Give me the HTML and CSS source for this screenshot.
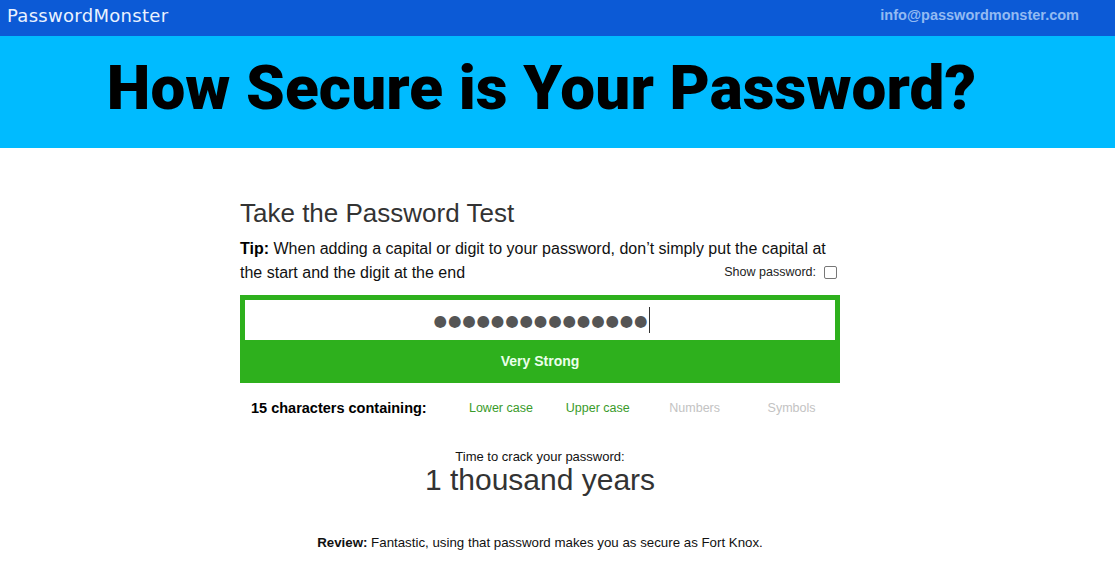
FILE: index.html
```html
<!DOCTYPE html>
<html>
<head>
<meta charset="utf-8">
<link rel="stylesheet" href="styles.css">
</head>
<body>
<header class="topbar">
  <div class="brand">PasswordMonster</div>
  <div class="email">info@passwordmonster.com</div>
</header>
<section class="hero">
  <h1 class="hero-title">How Secure is Your Password?</h1>
</section>
<main class="content">
  <h2 class="test-title">Take the Password Test</h2>
  <p class="tip"><b>Tip:</b> When adding a capital or digit to your password, don’t simply put the capital at the start and the digit at the end<label class="show"><span>Show password:</span><span class="checkbox"></span></label></p>
  <div class="meter">
    <div class="field"><span class="dots">●●●●●●●●●●●●●●●</span><span class="caret"></span></div>
    <div class="strength">Very Strong</div>
  </div>
  <div class="chars">
    <div class="chars-label">15 characters containing:</div>
    <div class="chk on">Lower case</div>
    <div class="chk on">Upper case</div>
    <div class="chk">Numbers</div>
    <div class="chk">Symbols</div>
  </div>
  <div class="crack">
    <div class="crack-label">Time to crack your password:</div>
    <div class="crack-value">1 thousand years</div>
  </div>
  <p class="review"><b>Review:</b> Fantastic, using that password makes you as secure as Fort Knox.</p>
</main>
</body>
</html>
```
FILE: styles.css
```css
* { box-sizing: border-box; }
body {
  margin: 0;
  font-family: "Liberation Sans", Arial, sans-serif;
  background: #fff;
  color: #000;
}
.topbar {
  height: 36px;
  background: #0c5ad6;
  display: flex;
  align-items: center;
  justify-content: space-between;
  padding: 0 36px 6px 7px;
}
.brand {
  font-family: "DejaVu Sans", sans-serif;
  font-size: 18px;
  color: #eaf2ff;
  letter-spacing: 0.3px;
}
.email {
  font-size: 14.5px;
  font-weight: bold;
  color: #93baf2;
}
.hero {
  height: 112px;
  background: #00bbff;
  display: flex;
  justify-content: center;
  padding: 12px 32px 0 0;
}
.hero-title {
  margin: 0;
  font-family: "Roboto", sans-serif;
  font-weight: 900;
  font-size: 62px;
  line-height: 80px;
  letter-spacing: 0.1px;
  color: #000;
}
.content {
  width: 600px;
  margin-left: 240px;
  padding-top: 50px;
}
.test-title {
  margin: 0;
  font-weight: normal;
  font-size: 26px;
  line-height: 30px;
  color: #333;
}
.tip {
  margin: 9px 0 0;
  font-size: 16px;
  line-height: 24px;
  color: #111;
}
.tip b { color: #000; }
.show {
  float: right;
  display: flex;
  align-items: center;
  gap: 8px;
  margin: 3px 3px 0 0;
  font-size: 12.5px;
  line-height: 16px;
  color: #222;
}
.checkbox {
  width: 13px;
  height: 13px;
  border: 1px solid #777;
  border-radius: 2px;
  background: #fff;
}
.meter {
  margin-top: 10px;
  background: #2eb01d;
  padding: 5px 5px 0 5px;
}
.field {
  height: 40px;
  background: #fff;
  display: flex;
  align-items: center;
  justify-content: center;
  padding-top: 2px;
}
.dots {
  font-family: "DejaVu Sans", sans-serif;
  font-size: 15.5px;
  color: #555;
  letter-spacing: 0.8px;
  margin-left: 4px;
}
.caret {
  width: 1px;
  height: 26px;
  background: #333;
  margin-left: 1px;
  margin-top: -2px;
}
.strength {
  height: 43px;
  display: flex;
  align-items: center;
  justify-content: center;
  color: #eaffea;
  font-weight: bold;
  font-size: 14px;
  padding-bottom: 1px;
}
.chars {
  display: flex;
  align-items: center;
  height: 50px;
  padding-left: 11px;
}
.chars-label {
  width: 208px;
  font-weight: bold;
  font-size: 14.5px;
}
.chk {
  width: 100px;
  text-align: center;
  font-size: 12.5px;
  color: #c3c3c3;
}
.chk.on { color: #3a9b2a; }
.crack {
  margin-top: 16px;
  text-align: center;
  color: #111;
}
.crack-label {
  font-size: 13px;
  line-height: 15px;
}
.crack-value {
  font-size: 30px;
  line-height: 32px;
  color: #333;
}
.review {
  margin: 39px 0 0;
  text-align: center;
  font-size: 13.3px;
  color: #111;
}
```
